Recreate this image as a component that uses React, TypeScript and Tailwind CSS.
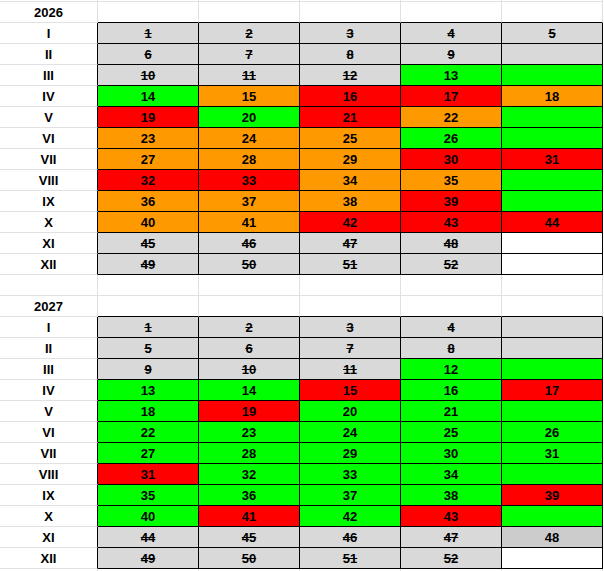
import React from 'react';

type Fill = 'gray' | 'dark' | 'green' | 'orange' | 'red' | 'white';

interface Cell {
    fill: Fill;
    value?: number;
    struck?: boolean;
}

interface Row {
    label: string;
    cells?: Cell[];
}

const fillClass: Record<Fill, string> = {
    gray: 'bg-[#d9d9d9]',
    dark: 'bg-[#cccccc]',
    green: 'bg-[#00ff00]',
    orange: 'bg-[#ff9900]',
    red: 'bg-[#ff0000]',
    white: 'bg-white',
};

// shorthand: "g12" gray struck, "G" green, "o" orange, "r" red, "w" white, "d48" darker gray
const parse = (spec: string): Cell[] =>
    spec.split(' ').map((tok) => {
        const kind = tok[0];
        const num = tok.length > 1 ? Number(tok.slice(1)) : undefined;
        if (kind === 's') return { fill: 'gray', value: num, struck: true };
        if (kind === 'x') return { fill: 'gray' };
        if (kind === 'd') return { fill: 'dark', value: num };
        if (kind === 'G') return { fill: 'green', value: num };
        if (kind === 'o') return { fill: 'orange', value: num };
        if (kind === 'r') return { fill: 'red', value: num };
        return { fill: 'white' };
    });

const block2026: Row[] = [
    { label: '2026' },
    { label: 'I', cells: parse('s1 s2 s3 s4 s5') },
    { label: 'II', cells: parse('s6 s7 s8 s9 x') },
    { label: 'III', cells: parse('s10 s11 s12 G13 G') },
    { label: 'IV', cells: parse('G14 o15 r16 r17 o18') },
    { label: 'V', cells: parse('r19 G20 r21 o22 G') },
    { label: 'VI', cells: parse('o23 o24 o25 G26 G') },
    { label: 'VII', cells: parse('o27 o28 o29 r30 r31') },
    { label: 'VIII', cells: parse('r32 r33 o34 o35 G') },
    { label: 'IX', cells: parse('o36 o37 o38 r39 G') },
    { label: 'X', cells: parse('o40 o41 r42 r43 r44') },
    { label: 'XI', cells: parse('s45 s46 s47 s48 w') },
    { label: 'XII', cells: parse('s49 s50 s51 s52 w') },
];

const block2027: Row[] = [
    { label: '2027' },
    { label: 'I', cells: parse('s1 s2 s3 s4 x') },
    { label: 'II', cells: parse('s5 s6 s7 s8 x') },
    { label: 'III', cells: parse('s9 s10 s11 G12 G') },
    { label: 'IV', cells: parse('G13 G14 r15 G16 r17') },
    { label: 'V', cells: parse('G18 r19 G20 G21 G') },
    { label: 'VI', cells: parse('G22 G23 G24 G25 G26') },
    { label: 'VII', cells: parse('G27 G28 G29 G30 G31') },
    { label: 'VIII', cells: parse('r31 G32 G33 G34 G') },
    { label: 'IX', cells: parse('G35 G36 G37 G38 r39') },
    { label: 'X', cells: parse('G40 r41 G42 r43 G') },
    { label: 'XI', cells: parse('s44 s45 s46 s47 d48') },
    { label: 'XII', cells: parse('s49 s50 s51 s52 w') },
];

const rows: Row[] = [...block2026, { label: '' }, ...block2027, { label: '' }];

const SheetRow: React.FC<{ row: Row; next?: Row }> = ({ row, next }) => {
    const inTable = !!row.cells;
    const closesAbove = inTable || !!next?.cells;
    return (
        <div className="flex h-[21px]">
            <div
                className={`w-[98px] shrink-0 flex items-center justify-center border-b border-r border-b-[#e1e1e1] pt-[1px] ${
                    inTable || next?.cells ? '' : ''
                } ${inTable ? 'border-r-black' : 'border-r-[#e1e1e1]'}`}
            >
                {row.label}
            </div>
            {[0, 1, 2, 3, 4].map((i) => {
                const cell = row.cells?.[i];
                return (
                    <div
                        key={i}
                        className={`w-[101px] shrink-0 flex items-center justify-center border-b border-r pt-[1px] ${
                            closesAbove ? 'border-b-black' : 'border-b-[#e1e1e1]'
                        } ${inTable ? 'border-r-black' : 'border-r-[#e1e1e1]'} ${
                            cell ? fillClass[cell.fill] : 'bg-white'
                        }`}
                    >
                        {cell?.value !== undefined && (
                            <span className={cell.struck ? 'line-through' : ''}>{cell.value}</span>
                        )}
                    </div>
                );
            })}
        </div>
    );
};

export default function App() {
    return (
        <div className="w-[604px] h-[571px] overflow-hidden bg-white text-black font-bold text-[13px] leading-none font-['Liberation_Sans',Arial,sans-serif]">
            <div className="flex h-[2px]">
                <div className="w-[98px] border-b border-r border-[#e1e1e1]" />
                {[0, 1, 2, 3, 4].map((i) => (
                    <div key={i} className="w-[101px] border-b border-r border-[#e1e1e1]" />
                ))}
            </div>
            {rows.map((row, idx) => (
                <SheetRow key={idx} row={row} next={rows[idx + 1]} />
            ))}
        </div>
    );
}
